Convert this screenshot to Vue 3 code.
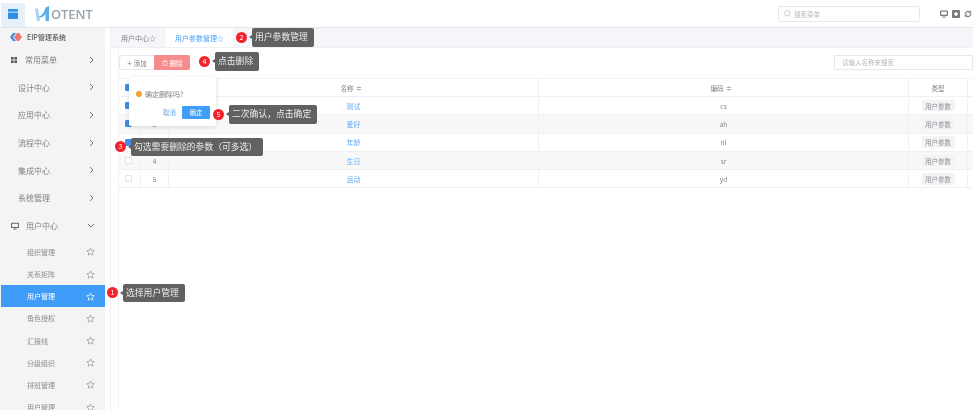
<script setup>
const menus = [
  { label: '设计中心' }, { label: '应用中心' }, { label: '流程中心' },
  { label: '集成中心' }, { label: '系统管理' }
]
const subs = ['组织管理', '关系矩阵', '用户管理', '角色授权', '汇报线', '分级组织', '排班管理', '用户管理']
const rows = [
  { no: 1, name: '测试', code: 'cs', on: true },
  { no: 2, name: '爱好', code: 'ah', on: true },
  { no: 3, name: '年龄', code: 'nl', on: true },
  { no: 4, name: '生日', code: 'sr', on: false },
  { no: 5, name: '运动', code: 'yd', on: false }
]
const callouts = [
  { n: 1, text: '选择用户管理', cls: 'c1' },
  { n: 2, text: '用户参数管理', cls: 'c2' },
  { n: 3, text: '勾选需要删除的参数（可多选）', cls: 'c3' },
  { n: 4, text: '点击删除', cls: 'c4' },
  { n: 5, text: '二次确认，点击确定', cls: 'c5' }
]
</script>

<template>
  <div class="page">
    <header class="top">
      <div class="burger">
        <svg width="10" height="10" viewBox="0 0 10 10"><rect width="10" height="10" rx="1" fill="#2f8fe6"/><rect y="2.600" width="10" height="1" fill="#d8ebfb"/></svg>
      </div>
      <div class="logo">
        <svg width="15" height="16" viewBox="0 0 15 16"><path d="M0 3 L3 2 L5 15 L2 15 Z" fill="#a9d3f2"/><path d="M3 11 C7 10 9.500 6 10.500 1.500 L14 0 L14 15 L10.500 15 L10.500 8 C9 10.500 6 12.500 3 11 Z" fill="#5aaeea"/></svg>
        <span class="logo-text">OTENT</span>
      </div>
      <div class="spring"></div>
      <div class="search">
        <svg width="7" height="7" viewBox="0 0 10 10" fill="none" stroke="#b9bdc4" stroke-width="1"><circle cx="4.500" cy="4.500" r="3.800"/><path d="M7.500 7.500 L9.500 9.500"/></svg>
        <span>搜索菜单</span>
      </div>
      <div class="tools">
        <svg width="8" height="8" viewBox="0 0 10 10"><rect y="0.500" width="10" height="7" rx="1.500" fill="#777"/><rect x="1.500" y="2" width="7" height="4" fill="#fff"/><rect x="3" y="8.200" width="4" height="1.300" fill="#777"/></svg>
        <svg width="8" height="8" viewBox="0 0 10 10"><rect width="10" height="10" rx="1.500" fill="#777"/><path d="M5 2.500 V7.500 M2.500 5 H7.500" stroke="#fff" stroke-width="2"/></svg>
        <svg width="8" height="8" viewBox="0 0 10 10" fill="none" stroke="#777" stroke-width="1.400"><path d="M1.500 5 A3.500 3.500 0 0 1 8 3.500 M8.500 5 A3.500 3.500 0 0 1 2 6.500"/><path d="M8.500 1 V4 H5.800 M1.500 9 V6 H4.200" stroke-width="1"/></svg>
      </div>
    </header>

    <div class="body">
      <aside class="side">
        <div class="brand">
          <svg width="12" height="8" viewBox="0 0 12 8"><path d="M0 4 L3 0 H6 L3 4 L6 8 H3 Z" fill="#3d8fe0"/><path d="M4 4 L7 0 H9 L12 4 L9 8 H7 Z" fill="#f0766f"/></svg>
          <b>EIP管理系统</b>
        </div>
        <div class="item first">
          <svg class="ico" width="6" height="6" viewBox="0 0 7 7" fill="#555"><rect width="3" height="3"/><rect x="4" width="3" height="3"/><rect y="4" width="3" height="3"/><rect x="4" y="4" width="3" height="3"/></svg>
          <span class="lbl">常用菜单</span>
          <svg class="chev" width="5" height="8" viewBox="0 0 5 8" fill="none" stroke="#777" stroke-width="1"><path d="M1 1 L4 4 L1 7"/></svg>
        </div>
        <div v-for="m in menus" :key="m.label" class="item">
          <span class="lbl plain">{{ m.label }}</span>
          <svg class="chev" width="5" height="8" viewBox="0 0 5 8" fill="none" stroke="#777" stroke-width="1"><path d="M1 1 L4 4 L1 7"/></svg>
        </div>
        <div class="item open">
          <svg class="ico wide" width="8" height="8" viewBox="0 0 10 10"><rect y="1" width="10" height="6.500" rx="1" fill="#666"/><rect x="1.300" y="2.200" width="7.400" height="4" fill="#f5f5f5"/><rect x="3" y="8.200" width="4" height="1.200" fill="#666"/></svg>
          <span class="lbl">用户中心</span>
          <svg class="chev down" width="8" height="5" viewBox="0 0 8 5" fill="none" stroke="#777" stroke-width="1"><path d="M1 1 L4 4 L7 1"/></svg>
        </div>
        <div v-for="(s, i) in subs" :key="i" class="sub" :class="{ active: i === 2 }">
          <span>{{ s }}</span>
          <svg width="9" height="9" viewBox="0 0 24 24" fill="none" :stroke="i === 2 ? '#fff' : '#9a9a9a'" stroke-width="2"><path d="M12 2.500 L15 9 L22 9.800 L16.800 14.500 L18.200 21.500 L12 18 L5.800 21.500 L7.200 14.500 L2 9.800 L9 9 Z"/></svg>
        </div>
      </aside>

      <main class="main">
        <nav class="tabs">
          <div class="tab">用户中心☆</div>
          <div class="tab on">用户参数管理☆</div>
        </nav>
        <section class="panel">
          <div class="bar">
            <div class="btn add"><span class="plus">+</span> 添加</div>
            <div class="btn del">
              <svg width="6" height="6" viewBox="0 0 10 10" fill="none" stroke="#fff" stroke-width="1"><path d="M1 2.500 H9 M3.500 2.500 V1 H6.500 V2.500 M2 2.500 V9.500 H8 V2.500"/></svg>
              删除
            </div>
            <div class="spring"></div>
            <div class="filter">请输入名称来搜索</div>
          </div>
          <div class="table">
            <div class="tr head">
              <div class="td chk"><i class="box on"></i></div>
              <div class="td"></div>
              <div class="td sort">名称 <em>≑</em></div>
              <div class="td sort">编码 <em>≑</em></div>
              <div class="td">类型</div>
              <div class="td"></div>
            </div>
            <div v-for="r in rows" :key="r.no" class="tr" :class="{ even: r.no % 2 === 0 }">
              <div class="td chk"><i class="box" :class="{ on: r.on }"></i></div>
              <div class="td">{{ r.no }}</div>
              <div class="td link">{{ r.name }}</div>
              <div class="td">{{ r.code }}</div>
              <div class="td"><span class="tag">用户参数</span></div>
              <div class="td"></div>
            </div>
          </div>
        </section>
      </main>
    </div>

    <div class="pop">
      <div class="pop-msg"><i class="warn"></i>确定删除吗?</div>
      <div class="pop-act"><span class="cancel">取消</span><span class="ok">确定</span></div>
    </div>

    <div v-for="c in callouts" :key="c.n" class="call" :class="c.cls">
      <span class="dot">{{ c.n }}</span>
      <span class="tip">{{ c.text }}</span>
    </div>
  </div>
</template>

<style scoped>
.page { position: relative; width: 973px; height: 410px; overflow: hidden; background: #fff; font-family: "Noto Sans CJK SC", "Liberation Sans", sans-serif; font-size: 7px; color: #666; filter: blur(0.5px); }
.top { height: 27px; display: flex; align-items: flex-end; border-bottom: 1px solid #e3e5e8; box-sizing: content-box; }
.burger { width: 24px; height: 24px; margin-left: 1px; background: #e5f0fb; display: flex; align-items: center; justify-content: center; padding-bottom: 2px; box-sizing: border-box; }
.logo { display: flex; align-items: center; margin-left: 10px; height: 27px; }
.logo-text { font: 600 12.800px "Open Sans", sans-serif; color: #97a3ad; margin-left: 1px; }
.spring { flex: 1; }
.search { width: 142px; height: 16px; align-self: center; box-sizing: border-box; border: 1px solid #e6e8eb; border-radius: 2px; display: flex; align-items: center; gap: 3px; padding-left: 5px; color: #b4b8be; margin-right: 20px; font-size: 6.500px; }
.tools { display: flex; gap: 4px; width: 33px; align-self: center; }
.body { display: flex; height: 382px; }
.side { width: 105px; background: #f4f4f4; overflow: hidden; flex: none; }
.brand { height: 18px; display: flex; align-items: center; gap: 5px; padding-left: 10px; color: #555; }
.brand b { font-weight: 500; }
.item { height: 27.700px; display: flex; align-items: center; position: relative; font-size: 8px; color: #808080; }
.item.first { height: 27.300px; }
.item.open { height: 28px; margin-bottom: 1px; }
.ico { margin-left: 11px; margin-right: 8px; }
.ico.wide { margin-right: 7px; }
.lbl.plain { margin-left: 18px; }
.chev { position: absolute; left: 89px; }
.chev.down { left: 87px; }
.sub { height: 22.200px; display: flex; align-items: center; justify-content: space-between; padding: 0 10px 0 27px; font-size: 7px; color: #8c8c8c; }
.sub.active { background: #3f9cf9; color: #fff; margin-left: 1px; padding-left: 26px; }
.main { flex: 1; margin-left: 5px; border-left: 1px solid #f0f1f4; min-width: 0; }
.tabs { height: 19px; background: #f4f6f9; display: flex; border-bottom: 1px solid #eef0f3; }
.tab { width: 55px; height: 19px; display: flex; align-items: center; justify-content: center; color: #808080; }
.tab.on { width: 67px; background: #fff; color: #4ba2f7; }
.panel { margin-left: 7px; border-left: 1px solid #f0f1f4; height: 362px; padding: 7px 0 0 0; box-sizing: border-box; }
.bar { display: flex; height: 15px; align-items: center; }
.btn { height: 15px; display: flex; align-items: center; justify-content: center; gap: 2px; box-sizing: border-box; font-size: 6.500px; }
.add { width: 36px; border: 1px solid #e7e9ec; color: #808080; background: #fff; border-radius: 2px 0 0 2px; }
.plus { font-size: 8px; line-height: 1; }
.del { width: 36px; background: #f78c8c; color: #fff; border-radius: 0 2px 2px 0; margin-left: -1px; }
.filter { width: 139px; height: 15px; box-sizing: border-box; border: 1px solid #e6e8eb; padding-left: 7px; line-height: 13px; color: #b4b8be; font-size: 6.500px; }
.table { margin-top: 8px; border-top: 1px solid #f2f3f5; }
.tr { display: grid; grid-template-columns: 22px 28px 370px 370px 59px 4px; height: 18.300px; border-bottom: 1px solid #eef0f3; box-sizing: border-box; }
.tr.head { height: 18px; }
.tr.even { background: #f8f8f9; }
.td { display: flex; align-items: center; justify-content: center; border-right: 1px solid #f0f2f5; color: #808080; font-size: 6.500px; }
.td:last-child { border-right: 0; }
.td.chk { justify-content: flex-start; padding-left: 6px; }
.td.sort { padding-right: 5px; }
.td em { font-style: normal; color: #b0b0b0; margin-left: 2px; }
.link { color: #62adf6; font-size: 7px; }
.box { width: 7px; height: 7px; box-sizing: border-box; border: 1px solid #dfe2e6; background: #fff; border-radius: 1px; }
.box.on { background: #3d8fe6; border-color: #3d8fe6; }
.tag { width: 33px; height: 11.500px; background: #f3f3f4; border-radius: 2px; box-sizing: border-box; display: flex; align-items: center; justify-content: center; font-size: 6.500px; color: #909399; }
.pop { position: absolute; left: 129px; top: 77px; width: 87px; height: 49px; background: #fff; border-radius: 2px; box-shadow: 0 1px 5px rgba(0,0,0,.14); padding: 11px 6px 7px 7px; box-sizing: border-box; }
.pop::before { content: ""; position: absolute; left: 39px; top: -3px; width: 6px; height: 6px; background: #fff; transform: rotate(45deg); }
.pop-msg { display: flex; align-items: center; gap: 3px; height: 12px; color: #808080; font-size: 7px; }
.warn { width: 6px; height: 6px; border-radius: 50%; background: #f2a42c; }
.pop-act { display: flex; justify-content: flex-end; align-items: center; margin-top: 5.500px; }
.cancel { color: #62adf6; font-size: 6.500px; margin-right: 6px; }
.ok { width: 28px; height: 13px; background: #3f9cf9; color: #fff; font-size: 6.500px; display: flex; align-items: center; justify-content: center; border-radius: 1px; }
.call { position: absolute; display: flex; align-items: center; height: 18.500px; }
.dot { width: 11px; height: 11px; border-radius: 50%; background: #f0232c; color: #fff; font-size: 7px; line-height: 11px; text-align: center; flex: none; }
.tip { position: relative; margin-left: 5px; height: 18.500px; line-height: 18px; padding: 0 6px 0 3px; background: #616161; color: #ececec; font-size: 8.800px; border-radius: 2px; white-space: nowrap; }
.tip::before { content: ""; position: absolute; left: -3px; top: 7px; border: 2px solid transparent; border-right-color: #616161; border-left-width: 0; border-right-width: 3px; }
.c1 { left: 107px; top: 283.500px; }
.c2 { left: 236px; top: 28px; }
.c3 { left: 115px; top: 137.500px; }
.c4 { left: 199px; top: 52px; }
.c5 { left: 213px; top: 105px; }
</style>
